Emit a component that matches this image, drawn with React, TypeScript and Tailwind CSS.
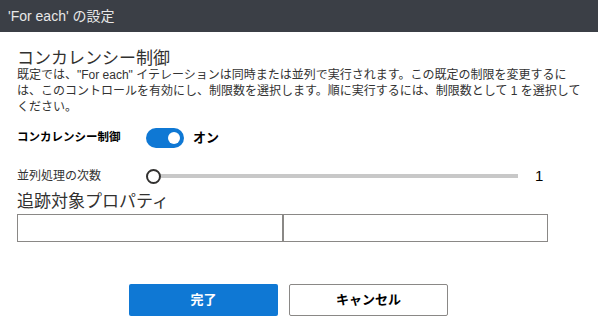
import React from 'react';

const font = { fontFamily: '"Liberation Sans", "Noto Sans CJK JP", sans-serif' };

export default function App() {
  return (
    <div className="w-[598px] h-[325px] bg-white text-[#323130] overflow-hidden" style={font}>
      <div className="h-[32px] bg-[#3b3f46] flex items-center px-[8px] text-[14px] text-[#e8e8e8]">
        'For each' の設定
      </div>

      <div className="px-[17px] pt-[20px]">
        <h2 className="text-[17px] leading-[13px]">コンカレンシー制御</h2>
        <p className="mt-[2px] text-[12px] leading-[16px] text-[#333] whitespace-nowrap">
          既定では、"For each" イテレーションは同時または並列で実行されます。この既定の制限を変更するに
          <br />
          は、このコントロールを有効にし、制限数を選択します。順に実行するには、制限数として 1 を選択して
          <br />
          ください。
        </p>

        <div className="mt-[13px] h-[20px] flex items-center">
          <div className="w-[129px] text-[11.5px] font-bold text-black">コンカレンシー制御</div>
          <div className="w-[38px] h-[20px] rounded-full bg-[#0f78d4] flex items-center justify-end pr-[4px]">
            <div className="w-[12px] h-[12px] rounded-full bg-white" />
          </div>
          <span className="ml-[9px] text-[13px] font-bold text-black">オン</span>
        </div>

        <div className="mt-[20px] h-[16px] flex items-center">
          <div className="w-[129px] text-[12px] text-[#333]">並列処理の次数</div>
          <div className="w-[372px] flex items-center">
            <div className="w-[15px] h-[15px] rounded-full border-2 border-[#323130] bg-white shrink-0" />
            <div className="flex-1 h-[4px] bg-[#c8c8c8]" />
          </div>
          <span className="ml-[17px] text-[15px] text-black">1</span>
        </div>

        <h2 className="mt-[8px] text-[17px] leading-[20px]">追跡対象プロパティ</h2>
        <div className="mt-[2px] w-[531px] grid grid-cols-2">
          <input className="h-[28px] border border-[#8a8886] outline-none" />
          <input className="h-[28px] border border-[#8a8886] outline-none" />
        </div>

        <div className="mt-[42px] flex gap-[11px] pl-[112px]">
          <button className="w-[149px] h-[32px] rounded-[2px] bg-[#0f78d4] text-white text-[13px] font-bold">
            完了
          </button>
          <button className="w-[159px] h-[32px] rounded-[2px] border border-[#8a8886] bg-white text-black text-[13px] font-bold">
            キャンセル
          </button>
        </div>
      </div>
    </div>
  );
}
